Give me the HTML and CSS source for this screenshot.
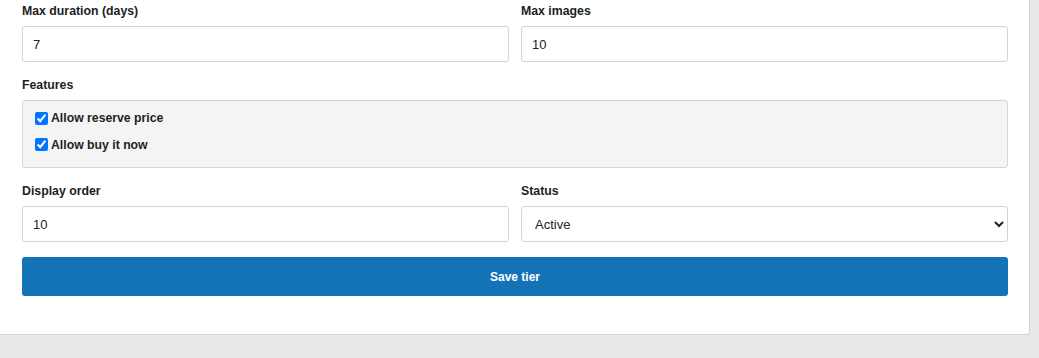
FILE: index.html
```html
<!DOCTYPE html>
<html lang="en">
<head>
<meta charset="utf-8">
<title>Tier form</title>
<link rel="stylesheet" href="styles.css">
</head>
<body>
<div class="card">
  <form class="form">
    <div class="row">
      <div class="group">
        <label class="label" for="dur">Max duration (days)</label>
        <input class="control" id="dur" type="text" value="7">
      </div>
      <div class="group">
        <label class="label" for="img">Max images</label>
        <input class="control" id="img" type="text" value="10">
      </div>
    </div>
    <div class="group">
      <div class="label">Features</div>
      <div class="features">
        <label class="check"><input type="checkbox" checked> Allow reserve price</label>
        <label class="check"><input type="checkbox" checked> Allow buy it now</label>
      </div>
    </div>
    <div class="row row-last">
      <div class="group">
        <label class="label" for="ord">Display order</label>
        <input class="control" id="ord" type="text" value="10">
      </div>
      <div class="group">
        <label class="label" for="st">Status</label>
        <select class="control select" id="st">
          <option>Active</option>
          <option>Inactive</option>
        </select>
      </div>
    </div>
    <button class="btn" type="button">Save tier</button>
  </form>
</div>
</body>
</html>
```

FILE: styles.css
```css
html, body {
  margin: 0;
  padding: 0;
  background: #e9e9e9;
  font-family: "Liberation Sans", Arial, sans-serif;
  color: #222;
}

.card {
  box-sizing: border-box;
  width: 1030px;
  background: #fff;
  border-right: 1px solid #d4d4d4;
  border-bottom: 1px solid #d4d4d4;
  border-radius: 0 0 3px 0;
  padding: 4px 21px 38px 22px;
}

.form {
  display: flex;
  flex-direction: column;
}

.row {
  display: grid;
  grid-template-columns: 1fr 1fr;
  column-gap: 12px;
}

.group {
  display: flex;
  flex-direction: column;
  margin-bottom: 16px;
}

.row-last .group {
  margin-bottom: 15px;
}

.label {
  font-size: 12.3px;
  font-weight: bold;
  line-height: 15px;
  margin-bottom: 7px;
  color: #1e1e1e;
}

.control {
  box-sizing: border-box;
  height: 36px;
  border: 1px solid #d4d4d4;
  border-radius: 3px;
  padding: 0 10px;
  font-family: "Liberation Sans", Arial, sans-serif;
  font-size: 13px;
  color: #222;
  background: #fff;
  margin: 0;
  outline: none;
}

.select {
  padding: 0 9px;
}

.features {
  box-sizing: border-box;
  height: 68px;
  background: #f4f4f4;
  border: 1px solid #d6d6d6;
  border-radius: 3px;
  padding: 4px 8px 9px;
  display: flex;
  flex-direction: column;
}

.check {
  display: flex;
  align-items: center;
  height: 27px;
  font-size: 12.25px;
  font-weight: bold;
  color: #1e1e1e;
}

.check input {
  margin: 0 3px 0 4px;
  width: 13px;
  height: 13px;
}

.btn {
  height: 39px;
  border: none;
  border-radius: 3px;
  background: #1473b7;
  color: #fff;
  font-family: "Liberation Sans", Arial, sans-serif;
  font-size: 12px;
  font-weight: bold;
  margin: 0;
  padding: 0;
  cursor: pointer;
}
```
